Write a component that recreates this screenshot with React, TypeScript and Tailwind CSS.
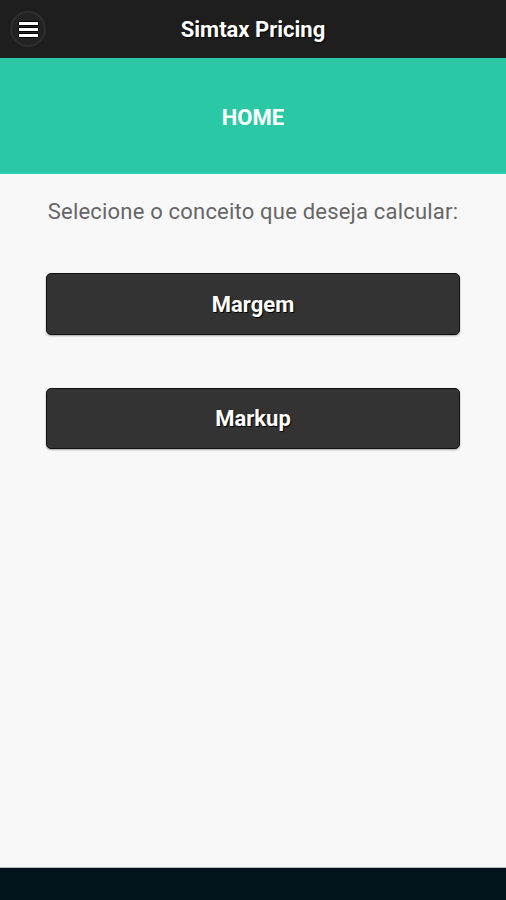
export default function App() {
  return (
    <div className="flex h-[900px] w-full flex-col bg-[#f8f8f8] font-['Roboto',sans-serif]">
      {/* Top bar */}
      <header className="relative flex h-[58px] shrink-0 items-center justify-center bg-[#1e1e1e]">
        <button className="absolute left-[10px] top-[11px] flex h-[36px] w-[36px] items-center justify-center rounded-full border-2 border-[#2e2e2e] bg-[#232323]">
          <span className="flex flex-col gap-[1px]">
            <span className="block h-[5px] w-[21px] rounded-[1px] border border-black bg-white" />
            <span className="block h-[5px] w-[21px] rounded-[1px] border border-black bg-white" />
            <span className="block h-[5px] w-[21px] rounded-[1px] border border-black bg-white" />
          </span>
        </button>
        <h1 className="text-[22px] font-bold text-white [text-shadow:1px_1px_1px_#000]">Simtax Pricing</h1>
      </header>

      {/* Page title band */}
      <div className="flex h-[116px] shrink-0 items-center justify-center border-b-2 border-[#2fd1b0] bg-[#2bc8a6] pt-[4px]">
        <h2 className="text-[22px] font-bold text-white">HOME</h2>
      </div>

      {/* Content */}
      <main className="flex flex-1 flex-col items-center px-[46px]">
        <p className="mt-[23px] text-[22px] leading-[30px] tracking-[0.2px] text-[#666]">Selecione o conceito que deseja calcular:</p>
        <button className="mt-[46px] h-[62px] w-full rounded-[5px] border border-[#111] bg-[#333] pt-[1px] text-[22px] font-bold text-white shadow-[0_1px_2px_rgba(0,0,0,0.35)] [text-shadow:1px_1px_1px_#000]">
          Margem
        </button>
        <button className="mt-[53px] h-[61px] w-full rounded-[5px] border border-[#111] bg-[#333] text-[22px] font-bold text-white shadow-[0_1px_2px_rgba(0,0,0,0.35)] [text-shadow:1px_1px_1px_#000]">
          Markup
        </button>
      </main>

      {/* System nav bar */}
      <footer className="h-[33px] shrink-0 border-t border-[#bbb] bg-[#02131c]" />
    </div>
  );
}
